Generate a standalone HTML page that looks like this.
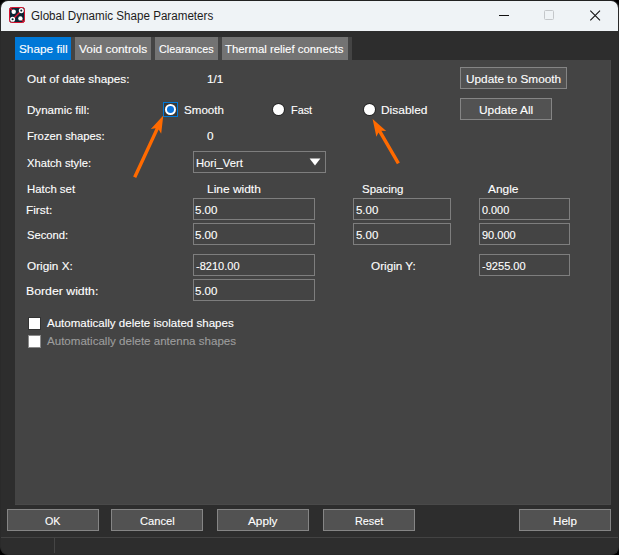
<!DOCTYPE html>
<html>
<head>
<meta charset="utf-8">
<title>Global Dynamic Shape Parameters</title>
<style>
html,body{margin:0;padding:0;}
body{width:619px;height:555px;background:#000;overflow:hidden;position:relative;font-family:"Liberation Sans",sans-serif;font-size:11.6px;color:#fff;}
.win{position:absolute;left:0;top:0;width:619px;height:555px;background:#2d2d2d;border-radius:8px;overflow:hidden;border:1px solid #2a2a2a;border-top-color:#222;box-sizing:border-box;}
.abs{position:absolute;}
.titlebar{position:absolute;left:0;top:0;width:617px;height:30px;background:#eff3f6;}
.t{position:absolute;white-space:nowrap;line-height:14px;height:14px;transform-origin:0 0;-webkit-text-stroke:0.12px currentColor;}
.title{color:#1c1c1c;font-size:12px;-webkit-text-stroke:0;}
.panel{position:absolute;left:14px;top:59px;width:596px;height:445px;background:#444;box-shadow:inset -1px -1px 0 #494949;}
.tabstrip{position:absolute;left:14px;top:36px;width:337px;height:23px;background:#444;}
.tab{position:absolute;top:36px;height:23px;background:#737373;}
.tab.on{background:#0078d7;}
.btn{position:absolute;box-sizing:border-box;height:22px;border:1px solid #858585;background:#525252;}
.inp{position:absolute;box-sizing:border-box;height:22px;border:1px solid #7e7e7e;background:#444;}
.radio{position:absolute;width:11.5px;height:11.5px;border-radius:50%;background:#fff;box-shadow:0 0 0 1px #262626;}
.cb{position:absolute;box-sizing:border-box;width:13px;height:13px;background:#fff;border:1px solid #333;}
</style>
</head>
<body>
<div class="win">
  <div class="titlebar"></div>
  <!-- icon -->
  <svg class="abs" style="left:8px;top:6px" width="16" height="16" viewBox="0 0 16 16">
    <rect x="0.5" y="0.5" width="15" height="15" rx="2" fill="#0b2434" stroke="#d3122f" stroke-width="1"/>
    <line x1="1" y1="1" x2="4.5" y2="4.5" stroke="#e0142f" stroke-width="1.4"/>
    <line x1="4" y1="12" x2="12" y2="4" stroke="#e0142f" stroke-width="1.4"/>
    <line x1="11.5" y1="11.5" x2="15" y2="15" stroke="#e0142f" stroke-width="1.4"/>
    <circle cx="4.7" cy="4.8" r="2.2" fill="#fff"/>
    <circle cx="11.4" cy="11.4" r="2.2" fill="#fff"/>
    <circle cx="12.3" cy="3.6" r="1.8" fill="#0b2434" stroke="#fff" stroke-width="1.5"/>
    <circle cx="3.6" cy="12.3" r="1.8" fill="#0b2434" stroke="#fff" stroke-width="1.5"/>
  </svg>
  <div class="t title" id="title" style="left:29.54px;top:7.6px;transform:scaleX(0.9689);">Global Dynamic Shape Parameters</div>
  <!-- window controls -->
  <svg class="abs" style="left:490px;top:0" width="120" height="30" viewBox="0 0 120 30">
    <line x1="8" y1="14.5" x2="18" y2="14.5" stroke="#111" stroke-width="1"/>
    <rect x="53.5" y="9.5" width="9" height="9" rx="1" fill="none" stroke="#c4c7ca" stroke-width="1"/>
    <path d="M99.3 9.6 L109 19.3 M109 9.6 L99.3 19.3" stroke="#111" stroke-width="1.1" fill="none"/>
  </svg>

  <div class="tabstrip"></div>
  <div class="tab on" style="left:14px;width:56px;"></div>
  <div class="tab" style="left:74px;width:76px;"></div>
  <div class="tab" style="left:154px;width:63px;"></div>
  <div class="tab" style="left:221px;width:126px;"></div>
  <div class="panel"></div>

  <div class="t" id="tab1" style="left:17.54px;top:41px;transform:scaleX(1.0182);">Shape fill</div>
  <div class="t" id="tab2" style="left:77.51px;top:41px;transform:scaleX(1.0257);">Void controls</div>
  <div class="t" id="tab3" style="left:157.60px;top:41px;transform:scaleX(0.9305);">Clearances</div>
  <div class="t" id="tab4" style="left:223.63px;top:41px;transform:scaleX(0.9821);">Thermal relief connects</div>

  <div class="t" id="l1" style="left:25.58px;top:71px;transform:scaleX(1.0127);">Out of date shapes:</div>
  <div class="t" id="v1" style="left:205.55px;top:71px;transform:scaleX(1.0171);">1/1</div>
  <div class="t" id="l2" style="left:25.56px;top:102px;transform:scaleX(1.0001);">Dynamic fill:</div>
  <div class="t" id="l3" style="left:25.62px;top:128px;transform:scaleX(0.9704);">Frozen shapes:</div>
  <div class="t" id="v3" style="left:205.69px;top:128px;transform:scaleX(1.0158);">0</div>
  <div class="t" id="l4" style="left:25.52px;top:155px;transform:scaleX(0.9646);">Xhatch style:</div>

  <!-- radios -->
  <div class="abs" style="left:162px;top:101px;width:15px;height:15px;box-sizing:border-box;border:1px solid #0078d7;background:#383838;"></div>
  <div class="abs" style="left:163.7px;top:102.5px;width:11.6px;height:11.6px;border-radius:50%;background:#fff;"></div>
  <div class="abs" style="left:166.1px;top:104.9px;width:6.8px;height:6.8px;border-radius:50%;background:#0b72d9;"></div>
  <div class="t" id="r1" style="left:182.52px;top:102px;transform:scaleX(0.9994);">Smooth</div>
  <div class="radio" style="left:271.75px;top:102.65px;"></div>
  <div class="t" id="r2" style="left:289.61px;top:102px;transform:scaleX(0.9366);">Fast</div>
  <div class="radio" style="left:362.75px;top:102.55px;"></div>
  <div class="t" id="r3" style="left:379.55px;top:102px;transform:scaleX(1.0294);">Disabled</div>

  <!-- buttons top right -->
  <div class="btn" style="left:459px;top:66px;width:107px;"></div>
  <div class="t" id="b1" style="left:464.64px;top:71px;transform:scaleX(1.0178);">Update to Smooth</div>
  <div class="btn" style="left:459px;top:97px;width:92px;"></div>
  <div class="t" id="b2" style="left:477.52px;top:102px;transform:scaleX(1.0255);">Update All</div>

  <!-- dropdown -->
  <div class="inp" style="left:192px;top:150px;width:133px;"></div>
  <div class="t" id="dd" style="left:194.67px;top:155px;transform:scaleX(0.9687);">Hori_Vert</div>
  <svg class="abs" style="left:308px;top:157px" width="12" height="8" viewBox="0 0 12 8"><path d="M0.6 0.4 L11.4 0.4 L6 7.6 Z" fill="#fff"/></svg>

  <!-- grid headers -->
  <div class="t" id="h0" style="left:25.66px;top:181px;transform:scaleX(0.9811);">Hatch set</div>
  <div class="t" id="h1" style="left:205.67px;top:181px;transform:scaleX(1.0310);">Line width</div>
  <div class="t" id="h2" style="left:360.58px;top:181px;transform:scaleX(0.9906);">Spacing</div>
  <div class="t" id="h3" style="left:486.58px;top:181px;transform:scaleX(1.0269);">Angle</div>

  <div class="t" id="g1" style="left:24.66px;top:202px;transform:scaleX(1.0214);">First:</div>
  <div class="t" id="g2" style="left:25.57px;top:227px;transform:scaleX(0.9684);">Second:</div>
  <div class="t" id="g3" style="left:25.58px;top:258px;transform:scaleX(1.0155);">Origin X:</div>
  <div class="t" id="g4" style="left:24.64px;top:283px;transform:scaleX(1.0591);">Border width:</div>
  <div class="t" id="g5" style="left:369.56px;top:258px;transform:scaleX(1.0127);">Origin Y:</div>

  <div class="inp" style="left:192px;top:197px;width:122px;"></div>
  <div class="inp" style="left:192px;top:222px;width:122px;"></div>
  <div class="inp" style="left:192px;top:253px;width:122px;"></div>
  <div class="inp" style="left:192px;top:278px;width:122px;"></div>
  <div class="inp" style="left:352px;top:197px;width:98px;"></div>
  <div class="inp" style="left:352px;top:222px;width:98px;"></div>
  <div class="inp" style="left:478px;top:197px;width:91px;"></div>
  <div class="inp" style="left:478px;top:222px;width:91px;"></div>
  <div class="inp" style="left:478px;top:253px;width:91px;"></div>

  <div class="t" id="i1" style="left:193.50px;top:202px;transform:scaleX(0.9946);">5.00</div>
  <div class="t" id="i2" style="left:193.50px;top:227px;transform:scaleX(0.9946);">5.00</div>
  <div class="t" id="i3" style="left:194.66px;top:258px;transform:scaleX(0.9509);">-8210.00</div>
  <div class="t" id="i4" style="left:193.50px;top:283px;transform:scaleX(0.9946);">5.00</div>
  <div class="t" id="i5" style="left:354.54px;top:202px;transform:scaleX(0.9865);">5.00</div>
  <div class="t" id="i6" style="left:354.54px;top:227px;transform:scaleX(0.9865);">5.00</div>
  <div class="t" id="i7" style="left:480.69px;top:202px;transform:scaleX(0.9378);">0.000</div>
  <div class="t" id="i8" style="left:480.51px;top:227px;transform:scaleX(0.9473);">90.000</div>
  <div class="t" id="i9" style="left:480.55px;top:258px;transform:scaleX(0.9539);">-9255.00</div>

  <!-- checkboxes -->
  <div class="cb" style="left:27px;top:315.7px;"></div>
  <div class="t" id="c1" style="left:45.58px;top:315px;transform:scaleX(0.9953);">Automatically delete isolated shapes</div>
  <div class="cb" style="left:27px;top:333.7px;border-color:#8a8a8a;"></div>
  <div class="t" id="c2" style="left:45.58px;top:333px;color:#9d9d9d;transform:scaleX(0.9978);">Automatically delete antenna shapes</div>

  <!-- bottom buttons -->
  <div class="btn" style="left:6px;top:508px;width:92px;"></div>
  <div class="btn" style="left:110px;top:508px;width:92px;"></div>
  <div class="btn" style="left:216px;top:508px;width:92px;"></div>
  <div class="btn" style="left:322px;top:508px;width:92px;"></div>
  <div class="btn" style="left:518px;top:508px;width:92px;"></div>
  <div class="t" id="k1" style="left:43.62px;top:513px;transform:scaleX(0.9195);">OK</div>
  <div class="t" id="k2" style="left:138.60px;top:513px;transform:scaleX(0.9621);">Cancel</div>
  <div class="t" id="k3" style="left:246.58px;top:513px;transform:scaleX(1.0149);">Apply</div>
  <div class="t" id="k4" style="left:353.60px;top:513px;transform:scaleX(0.9336);">Reset</div>
  <div class="t" id="k5" style="left:551.60px;top:513px;transform:scaleX(1.0008);">Help</div>

  <!-- status bar -->
  <div class="abs" style="left:0;top:536px;width:617px;height:1px;background:#434343;"></div>
  <div class="abs" style="left:53px;top:537px;width:1px;height:15px;background:#454545;"></div>

  <!-- arrows -->
  <svg class="abs" style="left:-1px;top:-1px;pointer-events:none" width="619" height="555" viewBox="0 0 619 555">
    <g fill="#ff6a00" stroke="none">
      <path d="M163.30 115.60 L150.84 128.89 L155.61 128.13 L133.16 176.48 L136.24 177.92 L158.69 129.56 L161.18 133.69 Z"/>
      <path d="M372.60 118.90 L376.36 136.72 L378.47 132.38 L396.93 164.15 L399.87 162.45 L381.41 130.67 L386.22 130.99 Z"/>
    </g>
  </svg>
</div>
</body>
</html>
